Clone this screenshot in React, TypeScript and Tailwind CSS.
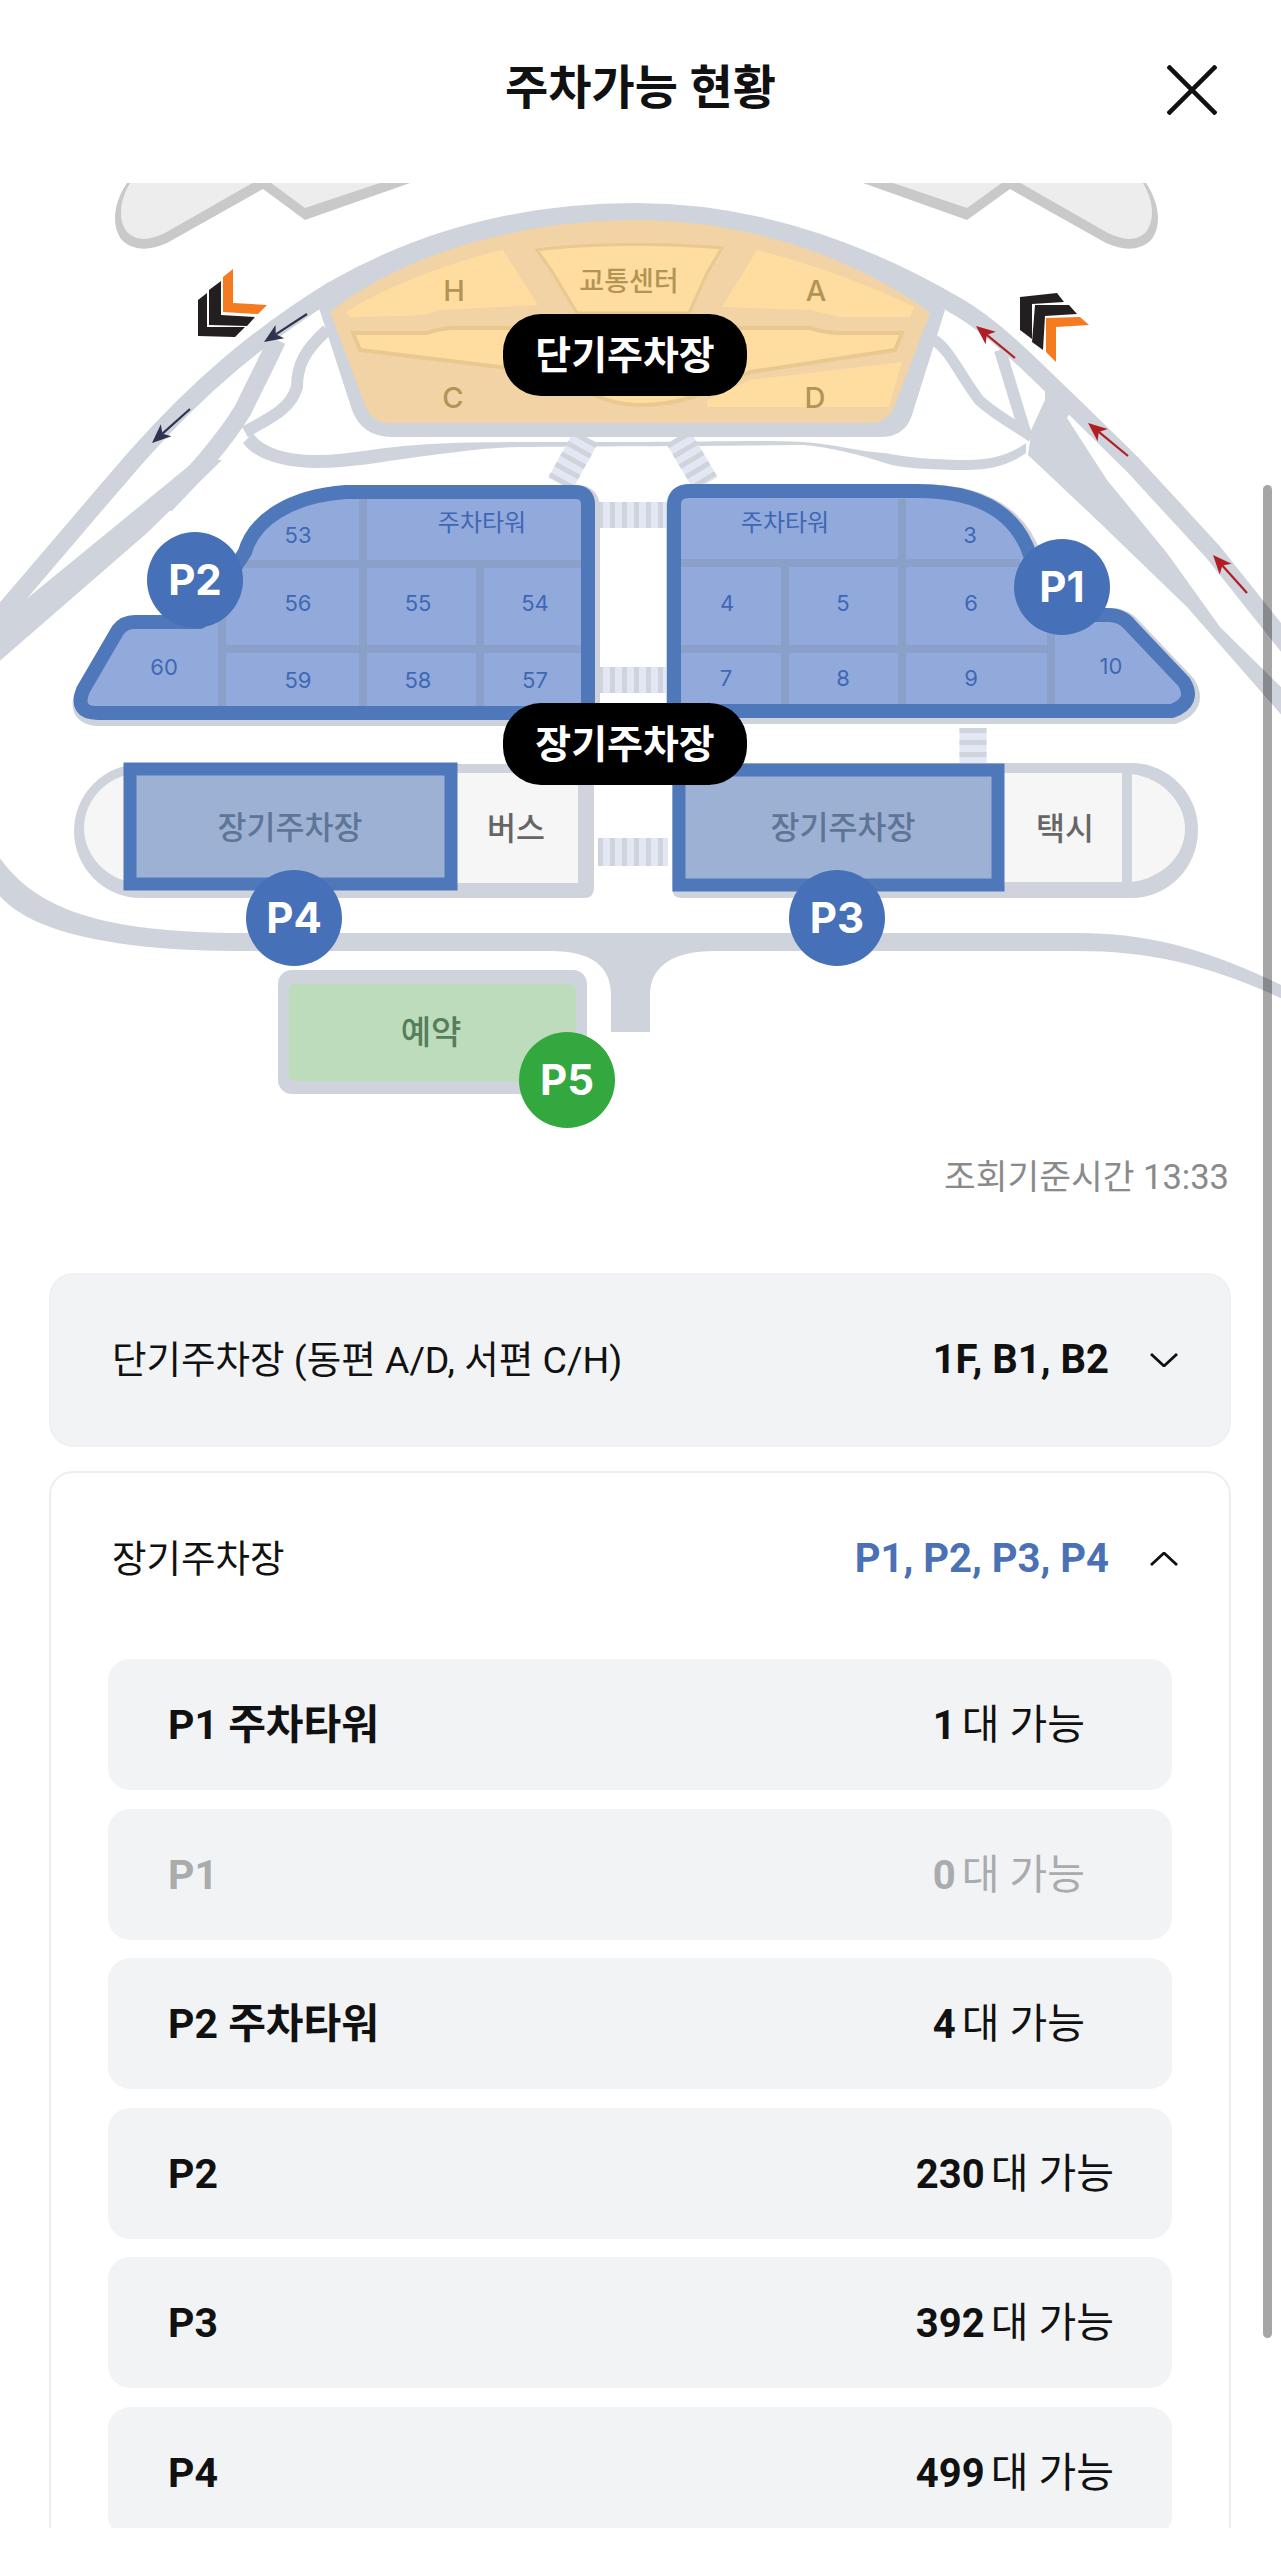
const road = "#cfd3dc";
const blockStroke = "#4f78ba";
const blockFill = "#92aadb";
const seam = "#8aa0c8";
const numBlue = "#3f67b5";

const p2Path =
  "M346 492H575Q588 492 588 505V713H98Q74 713 83 690L118 630Q124 622 135 622H200L245 552C254 520 290 496 346 492Z";
const p1Path =
  "M690 491H918C975 491 1015 510 1030 555L1090 615H1108Q1122 615 1130 625L1184 682Q1196 702 1172 711H674V505Q674 491 690 491Z";

const blockNumbers = [
  ["53", 298, 535],
  ["56", 298, 603],
  ["55", 418, 603],
  ["54", 535, 603],
  ["59", 298, 680],
  ["58", 418, 680],
  ["57", 535, 680],
  ["60", 164, 667],
  ["3", 970, 535],
  ["4", 727, 603],
  ["5", 843, 603],
  ["6", 971, 603],
  ["7", 726, 678],
  ["8", 843, 678],
  ["9", 971, 678],
  ["10", 1111, 666],
] as const;

const pins = [
  ["P1", 1062, 587, "#4670b8"],
  ["P2", 195, 580, "#4670b8"],
  ["P3", 837, 918, "#4670b8"],
  ["P4", 294, 918, "#4670b8"],
  ["P5", 567, 1080, "#32a83e"],
] as const;

const rows = [
  { name: "P1 주차타워", count: 1 },
  { name: "P1", count: 0 },
  { name: "P2 주차타워", count: 4 },
  { name: "P2", count: 230 },
  { name: "P3", count: 392 },
  { name: "P4", count: 499 },
];

// tail -> tip, head is a notched triangle
const Arrow = ({ x1, y1, x2, y2, color }: { x1: number; y1: number; x2: number; y2: number; color: string }) => {
  const len = Math.hypot(x2 - x1, y2 - y1);
  const ux = (x2 - x1) / len;
  const uy = (y2 - y1) / len;
  const bx = x2 - ux * 19;
  const by = y2 - uy * 19;
  const nx = x2 - ux * 14;
  const ny = y2 - uy * 14;
  return (
    <g>
      <line x1={x1} y1={y1} x2={nx} y2={ny} stroke={color} strokeWidth={2.2} />
      <polygon
        fill={color}
        points={`${x2},${y2} ${bx - uy * 8},${by + ux * 8} ${nx},${ny} ${bx + uy * 8},${by - ux * 8}`}
      />
    </g>
  );
};

const Connector = ({ x1, y1, x2, y2, width }: { x1: number; y1: number; x2: number; y2: number; width: number }) => (
  <g>
    <line x1={x1} y1={y1} x2={x2} y2={y2} stroke="#e3e7f3" strokeWidth={width} />
    <line x1={x1} y1={y1} x2={x2} y2={y2} stroke={road} strokeWidth={width} strokeDasharray="5 7" />
  </g>
);

const Pill = ({ y, label }: { y: number; label: string }) => (
  <g>
    <rect x={503} y={y} width={244} height={82} rx={38} fill="#000" />
    <text x={625} y={y + 41} dy="0.36em" textAnchor="middle" fontSize={39} fontWeight={700} fill="#fff">
      {label}
    </text>
  </g>
);

const ParkingMap = () => (
  <svg viewBox="0 183 1281 945" className="block h-[945px] w-[1281px] font-['Inter','Noto_Sans_CJK_KR',sans-serif]">
    {/* airport blobs at the top */}
    <g>
      <path d="M127 183C112 205 112 228 122 240C134 252 152 250 167 243L263 189L305 220L410 183Z" fill="#c9c9c9" />
      <path d="M130 183C118 203 119 222 127 232C137 242 150 240 165 233L263 177L305 208L380 183Z" fill="#ededed" />
      <path d="M1146 183C1161 205 1161 228 1151 240C1139 252 1121 250 1106 243L1010 189L967 220L863 183Z" fill="#c9c9c9" />
      <path d="M1143 183C1155 203 1154 222 1146 232C1136 242 1123 240 1108 233L1010 177L967 208L893 183Z" fill="#ededed" />
    </g>

    {/* roads */}
    <g fill="none" stroke={road} strokeLinejoin="round">
      <path
        strokeWidth={18}
        d="M-12 630C40 570 90 510 138 455C200 385 260 335 333 290C420 240 520 212 636 212C760 212 870 255 960 308C1000 332 1040 375 1075 408L1133 465L1213 552L1295 655"
      />
      <path strokeWidth={18} d="M165 505C190 480 225 440 243 410C255 385 268 360 277 340" />
      <path strokeWidth={12} d="M327 330C305 350 297 365 297 387C290 410 270 418 245 432" />
      <path strokeWidth={12} d="M1000 350L1025 432" />
      <path strokeWidth={11} d="M934 340C950 350 960 375 979 400C995 415 1015 425 1032 437" />
    </g>
    <path fill={road} d="M196 460L41 587L-5 625V665L147 533L222 460Z" />
    <path
      fill={road}
      d="M1045 385L1075 405L1067 418L1107 480L1167 553L1220 627L1285 691V719L1187 607L1100 523L1028 455L1032 428L1045 400Z"
    />
    <path
      fill={road}
      d="M253 433C262 447 285 455 317 455C350 455 380 447 417 445C470 441 550 442 636 442C720 442 760 440 803 442C835 444 860 452 885 453C910 458 940 460 967 460C990 460 1010 455 1026 443V453C1010 465 990 470 967 470C930 470 900 468 885 463C860 455 830 447 803 445C720 446 600 446 517 447C480 448 450 453 417 457C380 462 350 468 317 468C285 468 255 460 243 443Z"
    />
    <path
      fill={road}
      d="M-5 851C30 905 90 933 245 933H1077C1150 933 1210 950 1285 987V1000C1210 965 1150 951 1077 951H714C675 951 650 965 650 995V1032H611V995C611 965 590 951 551 951H245C90 951 20 925 -5 890Z"
    />

    {/* connectors */}
    <Connector x1={586} y1={437} x2={560} y2={484} width={27} />
    <Connector x1={678} y1={437} x2={706} y2={484} width={27} />
    <Connector x1={598} y1={515} x2={668} y2={515} width={26} />
    <Connector x1={598} y1={680} x2={668} y2={680} width={26} />
    <Connector x1={598} y1={852} x2={668} y2={852} width={28} />
    <Connector x1={973} y1={728} x2={973} y2={766} width={27} />

    {/* terminal */}
    <path
      fill={road}
      d="M318 305L352 410Q362 437 392 437H880Q905 437 912 415L945 310C860 250 750 212 636 212C520 212 400 250 318 305Z"
    />
    <path
      fill="#f1d3a5"
      d="M330 312C400 255 520 220 636 220C750 220 860 260 930 313L895 405Q888 423 870 423H390Q372 423 365 405Z"
    />
    <g fill="#ffdda0">
      <path d="M346 312C390 285 450 262 503 250L538 305L440 310Q425 316 400 316L350 317Z" />
      <path d="M757 250C815 265 870 285 914 307L910 317H840L810 310L722 307Z" />
      <path d="M707 407H889L902 362L750 380L707 400Z" />
      <path
        stroke="#e9c98f"
        strokeWidth={3}
        d="M537 250C590 243 670 243 722 248L707 273L689 313H577L553 273Z"
      />
      <path
        stroke="#e9c98f"
        strokeWidth={4}
        d="M353 333H427Q440 328 455 328H810Q825 333 840 333H902L895 350L750 372C720 385 690 405 640 405C600 405 580 385 540 372L360 350Z"
      />
    </g>
    <g fontSize={29} fontWeight={500} fill="#b39455" textAnchor="middle">
      <text x={454} y={301}>H</text>
      <text x={816} y={301}>A</text>
      <text x={453} y={408}>C</text>
      <text x={815} y={408}>D</text>
      <text x={629} y={291} fontSize={27}>교통센터</text>
    </g>

    {/* arrows and chevrons */}
    <Arrow x1={307} y1={314} x2={264} y2={342} color="#2e3350" />
    <Arrow x1={190} y1={409} x2={152} y2={443} color="#2e3350" />
    <Arrow x1={1015} y1={358} x2={976} y2={326} color="#b01e23" />
    <Arrow x1={1128} y1={456} x2={1088} y2={423} color="#b01e23" />
    <Arrow x1={1247} y1={593} x2={1213} y2={555} color="#b01e23" />
    <polygon fill="#f47b20" points="233,269 233,303 267,305 258,314 223,312 223,277" />
    <polygon fill="#231f20" points="221,281 221,315 255,317 247,326 209,325 209,290" />
    <polygon fill="#231f20" points="207,293 207,327 245,327 235,337 198,336 198,300" />
    <polygon fill="#231f20" points="1020,297 1057,293 1064,302 1032,304 1032,339 1020,330" />
    <polygon fill="#231f20" points="1035,305 1069,305 1077,314 1045,316 1043,350 1032,342" />
    <polygon fill="#f47b20" points="1046,318 1080,317 1089,325 1056,327 1056,362 1046,352" />

    {/* P2 and P1 blocks */}
    <g fill="none" stroke="#ced2da" strokeWidth={20} strokeLinejoin="round">
      <path d={p2Path} transform="translate(2 3)" />
      <path d={p1Path} transform="translate(2 3)" />
    </g>
    <path d={p2Path} fill={blockFill} />
    <path d={p1Path} fill={blockFill} />
    <g stroke={seam} strokeWidth={8}>
      <line x1={363} y1={499} x2={363} y2={707} />
      <line x1={480} y1={564} x2={480} y2={707} />
      <line x1={222} y1={600} x2={222} y2={707} />
      <line x1={245} y1={564} x2={582} y2={564} />
      <line x1={222} y1={649} x2={582} y2={649} />
      <line x1={785} y1={563} x2={785} y2={705} />
      <line x1={902} y1={499} x2={902} y2={705} />
      <line x1={680} y1={563} x2={1020} y2={563} />
      <line x1={680} y1={649} x2={1051} y2={649} />
      <line x1={1051} y1={630} x2={1051} y2={705} />
    </g>
    <g fill="none" stroke={blockStroke} strokeWidth={14} strokeLinejoin="round">
      <path d={p2Path} />
      <path d={p1Path} />
    </g>
    <g fontSize={22} fill={numBlue} textAnchor="middle">
      {blockNumbers.map(([label, x, y]) => (
        <text key={label} x={x} y={y} dy="0.36em">
          {label}
        </text>
      ))}
      <text x={482} y={522} dy="0.36em" fontSize={24}>주차타워</text>
      <text x={785} y={522} dy="0.36em" fontSize={24}>주차타워</text>
    </g>

    {/* bus / taxi rows */}
    <path fill={road} d="M141 764H584Q594 764 594 774V888Q594 898 584 898H141C104 898 74 868 74 831C74 794 104 764 141 764Z" />
    <path fill="#f6f6f6" d="M141 773H578V883H141C110 883 84 858 84 828C84 798 110 773 141 773Z" />
    <path fill={road} d="M672 763H1131C1168 763 1198 793 1198 830C1198 868 1168 898 1131 898H682Q672 898 672 888Z" />
    <rect x={1004} y={773} width={118} height={109} fill="#f6f6f6" />
    <path fill="#f6f6f6" d="M1132 774C1162 778 1185 802 1185 829C1185 856 1162 878 1132 882Z" />
    <g fill="#9db1d5" stroke={blockStroke} strokeWidth={13}>
      <rect x={130} y={769} width={321} height={115} />
      <rect x={679} y={770} width={319} height={115} />
    </g>
    <g fontSize={31.5} fontWeight={500} textAnchor="middle">
      <text x={290} y={828} dy="0.36em" fill="#5f7595">장기주차장</text>
      <text x={843} y={828} dy="0.36em" fill="#5f7595">장기주차장</text>
      <text x={516} y={829} dy="0.36em" fill="#666">버스</text>
      <text x={1065} y={829} dy="0.36em" fill="#666">택시</text>
    </g>

    {/* reservation block */}
    <rect x={278} y={970} width={309} height={124} rx={14} fill={road} />
    <rect x={289} y={984} width={287} height={97} rx={6} fill="#bddcbb" />
    <text x={431} y={1032} dy="0.36em" fontSize={33} fontWeight={500} textAnchor="middle" fill="#567d5c">
      예약
    </text>

    <Pill y={314} label="단기주차장" />
    <Pill y={703} label="장기주차장" />

    {pins.map(([label, x, y, color]) => (
      <g key={label}>
        <circle cx={x} cy={y} r={48} fill={color} />
        <text x={x} y={y} dy="0.36em" textAnchor="middle" fontSize={42} fontWeight={700} fill="#fff">
          {label}
        </text>
      </g>
    ))}
  </svg>
);

const Chevron = ({ up }: { up?: boolean }) => (
  <svg viewBox="0 0 28 14" className="ml-[41px] h-[14px] w-[28px]" fill="none" stroke="#111" strokeWidth={2.8}>
    <path d={up ? "M1 13L14 1L27 13" : "M1 1L14 13L27 1"} />
  </svg>
);

export default function App() {
  return (
    <div className="relative h-[2560px] w-full overflow-hidden bg-white font-['Roboto','Noto_Sans_CJK_KR',sans-serif] text-[#111]">
      <div className="h-[2528px] overflow-hidden">
        <header className="relative flex h-[176px] items-center justify-center">
          <h1 className="text-[47px] font-bold">주차가능 현황</h1>
          <svg viewBox="0 0 50 50" className="absolute left-[1167px] top-[65px] h-[50px] w-[50px]" stroke="#111" strokeWidth={4.5}>
            <path d="M1 1L49 49M49 1L1 49" />
          </svg>
        </header>
        <div className="mt-[7px]">
          <ParkingMap />
        </div>
        <p className="mt-[25px] pr-[52px] text-right text-[34.5px] leading-[48px] text-[#8a8a8a]">조회기준시간 13:33</p>

        <div className="mx-[49px] mt-[72px] w-[1182px]">
          <div className="flex h-[174px] items-center rounded-[24px] border-2 border-[#eef0f3] bg-[#f1f3f5] pl-[61px] pr-[51px]">
            <span className="flex-1 text-[37.5px]">단기주차장 (동편 A/D, 서편 C/H)</span>
            <span className="text-[40px] font-bold">1F, B1, B2</span>
            <Chevron />
          </div>
          <div className="mt-[24px] rounded-[24px] border-2 border-[#eceef1] px-[57px]">
            <div className="-mr-[6px] flex h-[172px] items-center pl-[4px]">
              <span className="flex-1 text-[37.5px]">장기주차장</span>
              <span className="text-[40px] font-bold text-[#4a70b5]">P1, P2, P3, P4</span>
              <Chevron up />
            </div>
            <div className="mt-[14px] flex flex-col gap-[18.5px] pb-[40px]">
              {rows.map((row) => (
                <div
                  key={row.name}
                  className={`flex h-[131px] items-center justify-between rounded-[22px] bg-[#f1f3f5] pl-[60px] pt-[3px] ${
                    row.count > 99 ? "pr-[58px]" : "pr-[87px]"
                  } ${row.count === 0 ? "text-[#a9abad]" : ""}`}
                >
                  <span className="text-[41px] font-bold">{row.name}</span>
                  <span className="text-[41px]">
                    <b className="mr-[6px] text-[40px] font-bold">{row.count}</b>대 가능
                  </span>
                </div>
              ))}
            </div>
          </div>
        </div>
      </div>
      <div className="absolute left-[1263px] top-[485px] h-[1853px] w-[9px] rounded-full bg-black/35" />
    </div>
  );
}
